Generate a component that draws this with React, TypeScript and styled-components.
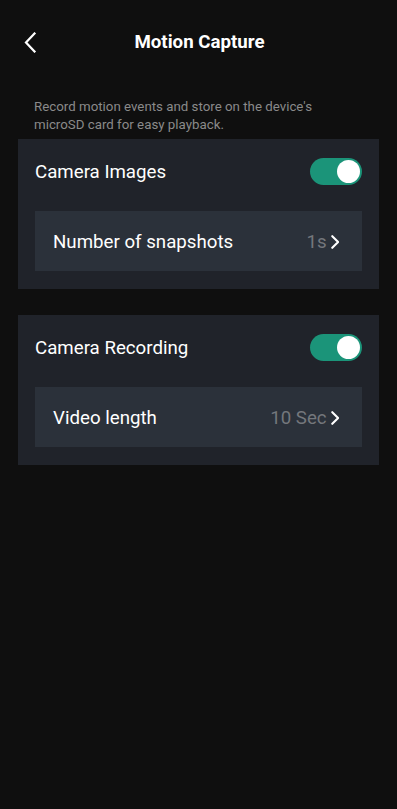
import React, { useState } from "react";
import styled, { createGlobalStyle } from "styled-components";

const Global = createGlobalStyle`
  html, body { margin: 0; padding: 0; background: #0f0f0f; }
  body { font-family: Roboto, "Noto Sans", Arial, sans-serif; -webkit-font-smoothing: antialiased; }
  * { box-sizing: border-box; }
`;

const Page = styled.div`
  width: 397px;
  min-height: 809px;
  background: #0f0f0f;
  color: #fff;
  display: flex;
  flex-direction: column;
`;

const Header = styled.header`
  display: grid;
  grid-template-columns: 60px 1fr 60px;
  align-items: center;
  height: 84px;
`;

const BackButton = styled.button`
  background: none;
  border: none;
  padding: 0 0 0 23px;
  height: 40px;
  display: flex;
  align-items: center;
  cursor: pointer;
`;

const Title = styled.h1`
  margin: 0;
  font-size: 18.7px;
  font-weight: 700;
  text-align: center;
  color: #fff;
  padding-left: 2px;
`;

const Description = styled.p`
  margin: 14px 0 5px 34px;
  font-size: 13.3px;
  line-height: 18px;
  color: #8a8a8a;
  width: 310px;
`;

const Card = styled.section`
  margin: 0 18px 26px 18px;
  background: #20232a;
  padding: 0 17px 18px 17px;
`;

const CardHeader = styled.div`
  height: 72px;
  display: flex;
  align-items: center;
  justify-content: space-between;
  padding-bottom: 6px;
`;

const CardTitle = styled.span`
  font-size: 18.7px;
  color: #fff;
`;

const Toggle = styled.button<{ $on: boolean }>`
  width: 52px;
  height: 27px;
  border-radius: 14px;
  border: none;
  padding: 0 2px;
  margin-bottom: 2px;
  background: ${(p) => (p.$on ? "#1b9479" : "#555")};
  display: flex;
  align-items: center;
  justify-content: ${(p) => (p.$on ? "flex-end" : "flex-start")};
  cursor: pointer;
`;

const Knob = styled.span`
  width: 23px;
  height: 23px;
  border-radius: 50%;
  background: #fff;
`;

const SubRow = styled.div`
  height: 60px;
  background: #2b313a;
  display: flex;
  align-items: center;
  justify-content: space-between;
  padding: 2px 23px 0 18px;
`;

const SubLabel = styled.span`
  font-size: 18.7px;
  color: #fff;
`;

const Value = styled.span`
  display: flex;
  align-items: center;
  gap: 4px;
  font-size: 18.7px;
  color: #74777c;
`;

const Chevron = ({ size = 12 }: { size?: number }) => (
  <svg width={size * 0.6} height={size} viewBox="0 0 7 12" fill="none">
    <path d="M1 1l5 5-5 5" stroke="#fff" strokeWidth="1.8" strokeLinecap="round" strokeLinejoin="round" />
  </svg>
);

function Section({ title, label, value }: { title: string; label: string; value: string }) {
  const [on, setOn] = useState(true);
  return (
    <Card>
      <CardHeader>
        <CardTitle>{title}</CardTitle>
        <Toggle $on={on} onClick={() => setOn(!on)}>
          <Knob />
        </Toggle>
      </CardHeader>
      <SubRow>
        <SubLabel>{label}</SubLabel>
        <Value>
          {value}
          <Chevron size={14} />
        </Value>
      </SubRow>
    </Card>
  );
}

export default function App() {
  return (
    <>
      <Global />
      <Page>
        <Header>
          <BackButton aria-label="Back">
            <svg width="14" height="21" viewBox="0 0 14 21" fill="none">
              <path d="M11.5 1.5L3 10.5l8.5 9" stroke="#fff" strokeWidth="2.2" strokeLinecap="square" />
            </svg>
          </BackButton>
          <Title>Motion Capture</Title>
          <span />
        </Header>
        <Description>
          Record motion events and store on the device's microSD card for easy playback.
        </Description>
        <Section title="Camera Images" label="Number of snapshots" value="1s" />
        <Section title="Camera Recording" label="Video length" value="10 Sec" />
      </Page>
    </>
  );
}
